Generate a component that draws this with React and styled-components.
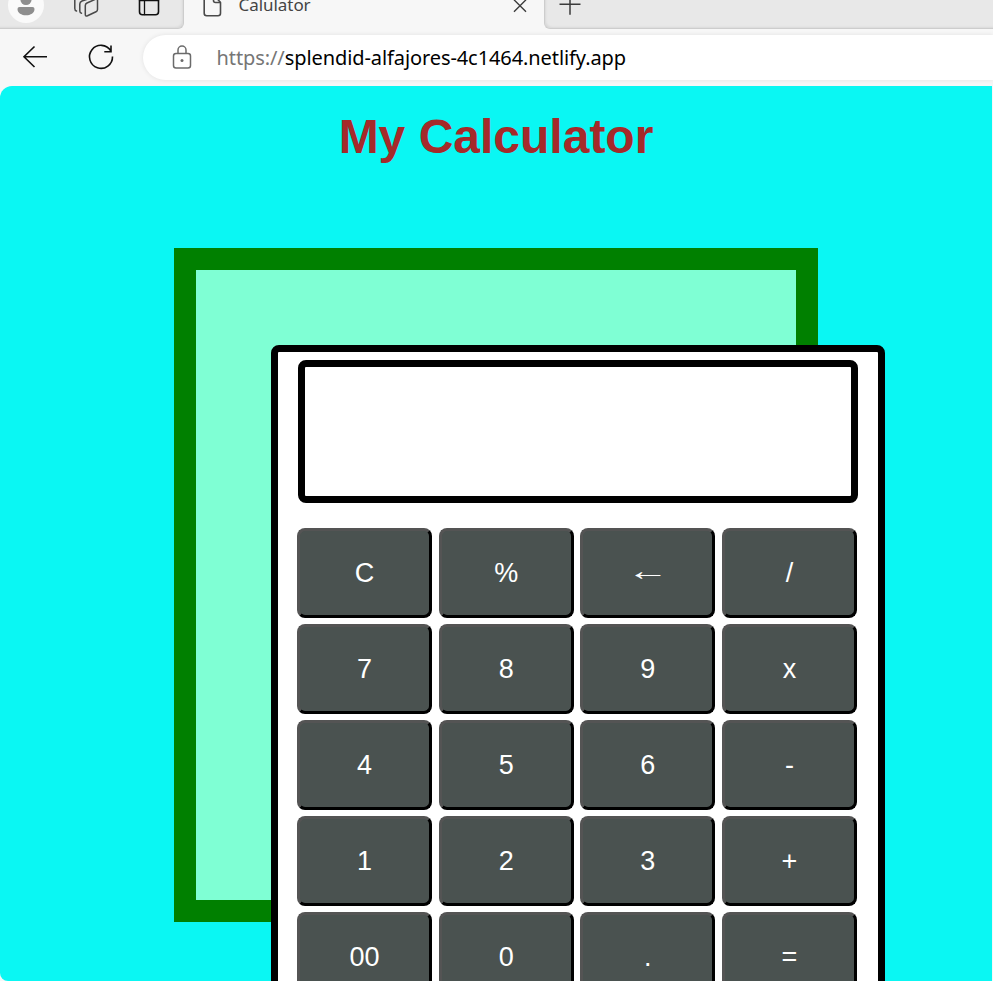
import React from "react";
import styled, { createGlobalStyle } from "styled-components";

const GlobalStyle = createGlobalStyle`
  *, *::before, *::after { box-sizing: border-box; }
  body { margin: 0; overflow: hidden; background: #f7f7f7; }
`;

const Browser = styled.div`
  width: 993px;
  height: 981px;
  display: flex;
  flex-direction: column;
  overflow: hidden;
  background: #f7f7f7;
  font-family: "Noto Sans", "Open Sans", sans-serif;
`;

const TabStrip = styled.div`
  display: flex;
  flex: none;
  height: 29px;
`;

const StripSection = styled.div`
  flex: ${(p) => (p.$grow ? "1" : "none")};
  width: ${(p) => (p.$grow ? "auto" : "184px")};
  height: 29px;
  background: #e8e8e8;
  border-bottom: 1px solid #cdcdcd;
  ${(p) =>
    p.$grow
      ? "border-left: 1px solid #cdcdcd; border-bottom-left-radius: 6px;"
      : "border-right: 1px solid #cdcdcd; border-bottom-right-radius: 6px;"}
  box-shadow: ${(p) => (p.$grow ? "inset 2px -2px 2px -1px #d9d9d9" : "inset -2px -2px 2px -1px #d9d9d9")};
`;

const StripIcons = styled.svg`
  display: block;
  width: ${(p) => p.$width}px;
  height: 28px;
`;

const Tab = styled.div`
  display: flex;
  width: 360px;
  height: 29px;
  padding: 0 12px 0 18px;
`;

const TabIcon = styled.svg`
  display: block;
  flex: none;
  width: 24px;
  height: 24px;
`;

const TabTitle = styled.span`
  flex: 1;
  height: 20px;
  margin-left: 12.5px;
  font-size: 17px;
  line-height: 9px;
  letter-spacing: -0.05px;
  color: #444;
  white-space: nowrap;
`;

const Toolbar = styled.div`
  display: flex;
  flex: none;
  height: 57px;
  padding: 6px 0 6px 18px;
`;

const NavIcon = styled.svg`
  display: block;
  flex: none;
  width: 32px;
  height: 44px;
  margin-right: ${(p) => p.$gap}px;
`;

const AddressBar = styled.div`
  display: flex;
  align-items: center;
  flex: 1;
  height: 45px;
  padding-left: 27px;
  background: #fff;
  border-radius: 23px 0 0 23px;
  box-shadow: 0 0 5px rgba(0, 0, 0, 0.09);
`;

const LockIcon = styled.svg`
  display: block;
  width: 24px;
  height: 28px;
  margin-right: 22.5px;
`;

const Url = styled.span`
  font-size: 20px;
  line-height: 28px;
  letter-spacing: -0.09px;
  color: #000;
  white-space: nowrap;
`;

const Scheme = styled.span`
  color: #767676;
`;

const Page = styled.main`
  width: 992px;
  height: 895px;
  flex: none;
  display: flex;
  flex-direction: column;
  align-items: center;
  overflow: hidden;
  background: #0af7f3;
  border-radius: 12px 0 0 8px;
  font-family: "Liberation Sans", Arial, sans-serif;
`;

const Heading = styled.h1`
  margin: 23px 0 0;
  height: 139px;
  font-size: 48px;
  line-height: 56px;
  font-weight: 700;
  color: brown;
`;

const Frame = styled.section`
  flex: none;
  width: 644px;
  height: 674px;
  padding: 75px 0 0 75px;
  border: 22px solid green;
  background: aquamarine;
`;

const Calculator = styled.div`
  width: 614px;
  height: 700px;
  padding: 8px 19px;
  border: 7px solid #000;
  border-radius: 8px;
  background: #fff;
`;

const Display = styled.div`
  width: 560px;
  height: 143px;
  margin: 0 0 25px 1px;
  border: 7px solid #000;
  border-radius: 8px;
  background: #fff;
`;

const Keypad = styled.div`
  display: grid;
  grid-template-columns: repeat(4, 135px);
  grid-auto-rows: 90px;
  gap: 6px 6.67px;
`;

const Key = styled.button`
  padding: 0 0 1px;
  border: 3px outset #000;
  border-radius: 8px;
  background: #4a5250;
  color: #fff;
  font-family: "Liberation Sans", Arial, sans-serif;
  font-size: 27px;
  line-height: 30px;
`;

const KeyLabel = styled.span`
  display: inline-block;
  transform: ${(p) => (p.$wide ? "translateY(-2px) scaleX(1.56)" : "none")};
`;

const keys = ["C", "%", "←", "/", "7", "8", "9", "x", "4", "5", "6", "-", "1", "2", "3", "+", "00", "0", ".", "="];

export default function App() {
  return (
    <Browser>
      <GlobalStyle />
      <TabStrip>
        <StripSection>
          <StripIcons $width={183} viewBox="0 0 183 28" fill="none" strokeLinecap="round" strokeLinejoin="round">
            <circle cx="26" cy="5" r="18" fill="#fafafa" />
            <circle cx="26" cy="-0.5" r="5.6" fill="#8e8e8e" />
            <path d="M19.5 7 H32.5 Q34.5 7 34.5 9 C34.5 13 30.5 15.3 26 15.3 S17.5 13 17.5 9 Q17.5 7 19.5 7Z" fill="#8e8e8e" />
            <g stroke="#484848" strokeWidth="1.5">
              <path d="M87 3 L95.5 -0.8 Q97.5 -1.5 97.5 0.7 V9.5 Q97.5 11 96 11.8 L87.5 15.8 Q85.3 16.5 85.3 14.5 V5.5 Q85.3 3.8 87 3Z" />
              <path d="M91 -2 L82 1 Q79.8 1.8 79.8 4 V11 Q79.8 12.9 81.5 13.2" />
              <path d="M74.8 -2 V8.5 Q74.8 10.5 76.5 11" />
            </g>
            <rect x="139.5" y="-5" width="19" height="19.7" rx="3" stroke="#111" strokeWidth="1.6" />
            <path d="M139.5 0.5 H158.5 M144.5 0.5 V14.5" stroke="#111" strokeWidth="1.3" />
          </StripIcons>
        </StripSection>
        <Tab>
          <TabIcon viewBox="0 0 24 24" fill="none" stroke="#4a4a4a" strokeWidth="1.6" strokeLinejoin="round">
            <path d="M2.2 -5 V13.2 Q2.2 15.7 4.7 15.7 H16 Q18.5 15.7 18.5 13.2 V2.5 H13.5 Q11.5 2.5 11.5 0.5 V-5" />
            <path d="M12 -5 L18.5 2.5" />
          </TabIcon>
          <TabTitle>Calulator</TabTitle>
          <TabIcon viewBox="0 0 24 24" stroke="#3b3b3b" strokeWidth="1.4">
            <path d="M6 -0.2 L18 11.8 M18 -0.2 L6 11.8" />
          </TabIcon>
        </Tab>
        <StripSection $grow>
          <StripIcons $width={448} viewBox="0 0 448 28" stroke="#3b3b3b" strokeWidth="1.5">
            <path d="M14.5 4.3 H35.5 M25 -6 V14.7" />
          </StripIcons>
        </StripSection>
      </TabStrip>
      <Toolbar>
        <NavIcon $gap={34} viewBox="0 0 32 44" fill="none" stroke="#111" strokeWidth="1.6">
          <path d="M29 21.8 H6 M16.5 11.5 L6 21.8 L16.5 32" />
        </NavIcon>
        <NavIcon $gap={27} viewBox="0 0 32 44" fill="none" stroke="#111" strokeWidth="1.6">
          <path d="M26.8 15.8 A11.5 11.5 0 1 0 28.5 21.5 M27 10.5 V16.8 H20.3" />
        </NavIcon>
        <AddressBar>
          <LockIcon viewBox="0 0 24 28" fill="none" stroke="#6b6b6b" strokeWidth="1.5">
            <rect x="3.5" y="9.5" width="17" height="14.5" rx="2.5" />
            <path d="M8 9.5 V6 A4 4 0 0 1 16 6 V9.5" />
            <circle cx="12" cy="16.5" r="1.5" fill="#6b6b6b" stroke="none" />
          </LockIcon>
          <Url>
            <Scheme>https://</Scheme>splendid-alfajores-4c1464.netlify.app
          </Url>
        </AddressBar>
      </Toolbar>
      <Page>
        <Heading>My Calculator</Heading>
        <Frame>
          <Calculator>
            <Display />
            <Keypad>
              {keys.map((key) => (
                <Key key={key}>
                  <KeyLabel $wide={key === "←"}>{key}</KeyLabel>
                </Key>
              ))}
            </Keypad>
          </Calculator>
        </Frame>
      </Page>
    </Browser>
  );
}
